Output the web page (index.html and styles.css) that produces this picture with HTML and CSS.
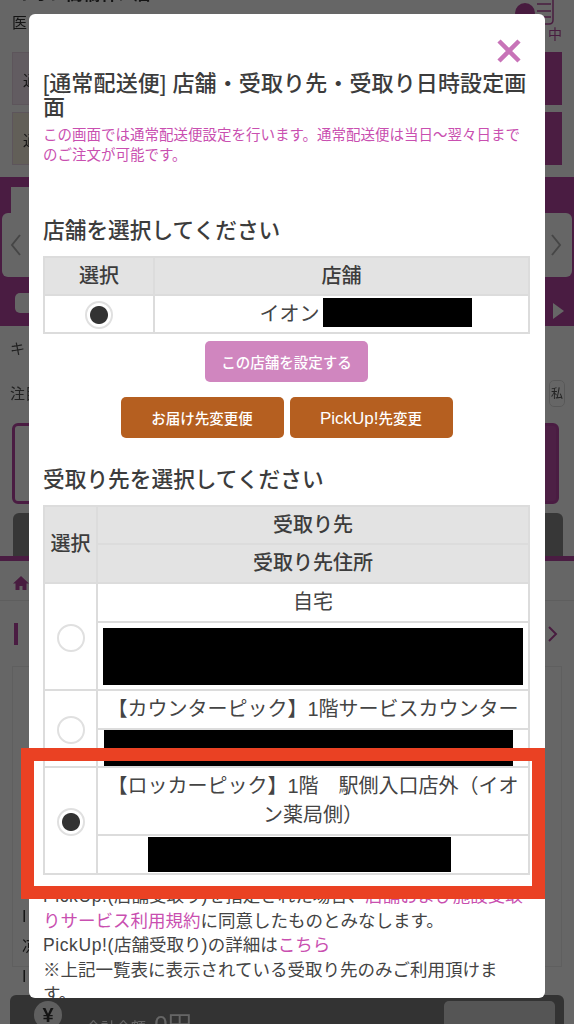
FILE: index.html
```html
<!DOCTYPE html>
<html lang="ja">
  <head>
    <meta charset="UTF-8" />
    <meta name="viewport" content="width=device-width, initial-scale=1.0" />
    <title>受取り先設定</title>
    <link rel="stylesheet" href="styles.css">
  </head>
  <body>
    <!-- PAGE BEHIND THE DIALOG -->
    <div class="page">
      <header class="shop-head">
        <div class="shop-info">
          <div class="shop-name">イオン高橋林ノ店</div>
          <div class="shop-sub">医</div>
        </div>
        <div class="cart">
          <svg class="cart-icon" width="48" height="25" viewBox="0 0 48 25">
            <circle cx="11" cy="13" r="10" fill="#b5489f" />
            <path d="M23 4h14M23 11h14M23 17h14M39 -2v22q0 4 -4 4h-7" fill="none" stroke="#b5489f" stroke-width="1.5" />
          </svg>
          <span class="cart-label">中</span>
        </div>
      </header>

      <div class="delivery-row">
        <div class="delivery-info tint-pink">通</div>
        <div class="delivery-btn"></div>
      </div>
      <div class="delivery-row">
        <div class="delivery-info tint-sand">通</div>
        <div class="delivery-btn"></div>
      </div>

      <!-- CALENDAR BAND -->
      <section class="band">
        <div class="band-tab"></div>
        <div class="band-cards">
          <div class="band-card">
            <svg width="12" height="24" viewBox="0 0 12 24">
              <path d="M10 2 2 12l8 10" fill="none" stroke="#b0b0b0" stroke-width="2" />
            </svg>
          </div>
          <div class="band-card">
            <svg width="12" height="24" viewBox="0 0 12 24">
              <path d="M2 2l8 10-8 10" fill="none" stroke="#b0b0b0" stroke-width="2" />
            </svg>
          </div>
        </div>
        <div class="band-foot">
          <div class="band-pill"></div>
          <div class="band-arrow"></div>
        </div>
      </section>

      <div class="key-row">キ</div>
      <div class="notice-row">
        <span>注目</span>
        <span class="notice-pill">私</span>
      </div>
      <div class="search-box"></div>
      <div class="dark-tab"></div>

      <nav class="crumbs">
        <svg width="16" height="16" viewBox="0 0 16 16">
          <path d="M8 1 0 8.500h2.500V15h4v-4h3v4h4V8.500H16z" fill="#b5489f" />
        </svg>
      </nav>

      <div class="section-head">
        <span class="section-mark"></span>
        <svg width="10" height="16" viewBox="0 0 10 16">
          <path d="M1 1l7 7-7 7" fill="none" stroke="#b5489f" stroke-width="2" />
        </svg>
      </div>

      <div class="item-box">
        <span>I</span>
        <span>凉</span>
        <span>I</span>
      </div>

      <footer class="total-bar">
        <span class="yen">¥</span>
        <span class="total-text">合計金額: <b>0円</b></span>
        <span class="total-btn"></span>
      </footer>
    </div>

    <div class="backdrop"></div>

    <!-- DIALOG -->
    <div class="modal">
      <div class="modal-top">
        <svg width="24" height="24" viewBox="0 0 24 24">
          <path d="M2 2l20 20M22 2 2 22" stroke="#c873b8" stroke-width="4.500" fill="none" />
        </svg>
      </div>
      <h2 class="modal-title">[通常配送便] 店舗・受取り先・受取り日時設定画面</h2>
      <p class="modal-note">この画面では通常配送便設定を行います。通常配送便は当日〜翌々日までのご注文が可能です。</p>

      <h3 class="block-title first">店舗を選択してください</h3>
      <table class="pick-table store-table">
        <tr>
          <th class="col-store-pick">選択</th>
          <th>店舗</th>
        </tr>
        <tr>
          <td class="cell-radio"><input class="radio" type="radio" name="store" checked /></td>
          <td><span class="store-name">イオン<span class="mask mask-store"></span></span></td>
        </tr>
      </table>

      <div class="btn-row set-row">
        <button class="btn btn-pink">この店舗を設定する</button>
      </div>
      <div class="btn-row change-row">
        <button class="btn btn-brown">お届け先変更便</button>
        <button class="btn btn-brown"><span class="btn-latin">PickUp!</span>先変更</button>
      </div>

      <h3 class="block-title second">受取り先を選択してください</h3>
      <table class="pick-table place-table">
        <tr class="place-head">
          <th class="col-place-pick" rowspan="2">選択</th>
          <th>受取り先</th>
        </tr>
        <tr>
          <th>受取り先住所</th>
        </tr>
        <tr>
          <td class="cell-radio" rowspan="2"><input class="radio" type="radio" name="place" /></td>
          <td>自宅</td>
        </tr>
        <tr>
          <td class="cell-mask home-mask"><div class="mask mask-home"></div></td>
        </tr>
        <tr>
          <td class="cell-radio" rowspan="2"><input class="radio" type="radio" name="place" /></td>
          <td>【カウンターピック】1階サービスカウンター</td>
        </tr>
        <tr>
          <td class="cell-mask counter-mask"><div class="mask mask-counter"></div></td>
        </tr>
        <tr>
          <td class="cell-radio" rowspan="2"><input class="radio" type="radio" name="place" checked /></td>
          <td class="cell-wrap">【ロッカーピック】1階　駅側入口店外（イオン薬局側）</td>
        </tr>
        <tr>
          <td class="cell-mask locker-mask"><div class="mask mask-locker"></div></td>
        </tr>
      </table>

      <p class="terms">
        <span class="latin">PickUp!(</span>店舗受取り<span class="latin">)</span>を指定された場合、<a href="#">店舗および施設受取りサービス利用規約</a>に同意したものとみなします。<br />
        <span class="latin">PickUp!(</span>店舗受取り<span class="latin">)</span>の詳細は<a href="#">こちら</a><br />
        ※上記一覧表に表示されている受取り先のみご利用頂けます。
      </p>
    </div>

    <!-- ANNOTATION -->
    <div class="red-frame"></div>
  </body>
</html>
```

FILE: styles.css
```css
/* RESET */
html,
body {
  margin: 0;
  padding: 0;
  height: 1024px;
  overflow: hidden;
}
*,
*::before,
*::after {
  box-sizing: border-box;
}

body {
  position: relative;
  width: 574px;
  font-family: "Liberation Sans", "Noto Sans CJK JP", sans-serif;
  color: #444;
  background: #fff;
}

/* PAGE BEHIND */
.page {
  height: 1024px;
  overflow: hidden;
  padding: 0 12px;
  color: #333;
  filter: blur(0.6px);
}
.shop-head {
  display: flex;
  justify-content: space-between;
  height: 52px;
}
.shop-name {
  margin: -17px 0 0 3px;
  font-size: 17px;
  line-height: 24px;
  font-weight: bold;
}
.shop-sub {
  margin-top: 6px;
  font-size: 15px;
  line-height: 20px;
}
.cart {
  display: flex;
  flex-direction: column;
  align-items: flex-end;
}
.cart-label {
  margin: 0;
  font-size: 14px;
  line-height: 18px;
  color: #b5489f;
}
.delivery-row {
  display: flex;
  justify-content: space-between;
  height: 53px;
  margin-bottom: 7px;
}
.delivery-info {
  width: 200px;
  padding: 16px 0 0 10px;
  font-size: 15px;
  border: 1px solid #e8d5e4;
}
.tint-pink {
  background: #f6e6f2;
}
.tint-sand {
  background: #f6eedd;
}
.delivery-btn {
  width: 100px;
  background: #bb4aa6;
}

/* BAND */
.band {
  margin: 12px -12px 0;
  height: 149px;
  padding: 10px 2px 0;
  background: #b946a5;
}
.band-tab {
  width: 60px;
  height: 26px;
  margin-left: 9px;
  background: #fff;
}
.band-cards {
  display: flex;
  justify-content: space-between;
}
.band-card {
  display: flex;
  align-items: center;
  width: 120px;
  height: 64px;
  padding: 0 8px;
  border-radius: 6px;
  background: #fff;
}
.band-card:last-child {
  justify-content: flex-end;
  padding-right: 10px;
}
.band-foot {
  display: flex;
  justify-content: space-between;
  margin-top: 16px;
}
.band-pill {
  width: 80px;
  height: 20px;
  margin-left: 13px;
  border-radius: 5px;
  background: #fff;
}
.band-arrow {
  width: 0;
  height: 0;
  margin: 10px 8px 0 0;
  border-left: 11px solid #fff;
  border-top: 8px solid transparent;
  border-bottom: 8px solid transparent;
}

.key-row {
  margin: 13px 0 0 -2px;
  height: 20px;
  font-size: 15px;
  line-height: 20px;
  color: #555;
}
.notice-row {
  display: flex;
  justify-content: space-between;
  margin: 21px 0 0 -2px;
  height: 43px;
  font-size: 15px;
  line-height: 27px;
  color: #555;
}
.notice-pill {
  width: 16px;
  height: 27px;
  margin-right: -3px;
  overflow: hidden;
  font-size: 12px;
  text-align: center;
  border: 1px solid #ddd;
  border-radius: 5px;
}
.search-box {
  height: 81px;
  margin: 0 3px 0 0;
  border: 3px solid #b946a5;
  border-radius: 6px;
  background: linear-gradient(to right, #fff 60%, #c050ac 60%);
}
.dark-tab {
  height: 43px;
  margin: 9px -1px 0 1px;
  border-radius: 6px 6px 0 0;
  background: #8a8a8a;
}
.crumbs {
  display: flex;
  align-items: center;
  height: 45px;
  margin: 0 -12px;
  padding: 4px 0 0 13px;
  border-top: 5px solid #b946a5;
  border-bottom: 1px solid #ececec;
}
.section-head {
  display: flex;
  justify-content: space-between;
  align-items: center;
  height: 65px;
  padding: 0 4px 0 2px;
}
.section-mark {
  width: 4px;
  height: 22px;
  background: #b946a5;
}
.item-box {
  display: flex;
  flex-direction: column;
  height: 301px;
  padding: 235px 0 0 9px;
  border: 1px solid #eee;
  font-size: 16px;
  line-height: 30px;
}

/* TOTAL BAR */
.total-bar {
  display: flex;
  align-items: flex-start;
  height: 40px;
  margin: 28px -2px 0;
  padding: 6px 9px 0 24px;
  border-radius: 6px 6px 0 0;
  color: #fff;
  background: #808080;
}
.yen {
  width: 28px;
  height: 28px;
  border-radius: 50%;
  font-size: 20px;
  line-height: 28px;
  font-weight: bold;
  text-align: center;
  color: #333;
  background: #eee;
}
.total-text {
  margin: 4px 0 0 24px;
  font-size: 15px;
}
.total-text b {
  font-size: 24px;
  font-weight: normal;
}
.total-btn {
  width: 111px;
  height: 30px;
  margin-left: auto;
  border-radius: 5px;
  background: #d5d5d5;
}

.backdrop {
  position: absolute;
  inset: 0;
  background: rgba(0, 0, 0, 0.6);
}

/* DIALOG */
.modal {
  position: absolute;
  top: 14px;
  left: 29px;
  width: 516px;
  height: 984px;
  overflow: hidden;
  padding: 25px 15px 0 14px;
  border-radius: 6px;
  background: #fff;
}
.modal-top {
  display: flex;
  justify-content: flex-end;
  height: 24px;
  margin: 0 9px 9px 0;
}
.modal-title {
  margin: 0;
  font-size: 22px;
  line-height: 24px;
  font-weight: 500;
  letter-spacing: 0.13px;
  color: #3c3c3c;
}
.modal-note {
  margin: 5px 0 0;
  font-size: 14.500px;
  line-height: 20px;
  color: #c94fb0;
}
.block-title {
  margin: 0 0 10px;
  font-size: 21.700px;
  line-height: 30px;
  font-weight: 500;
  color: #3c3c3c;
}
.block-title.first {
  margin-top: 51px;
}
.block-title.second {
  margin-top: 27px;
}

/* TABLES */
.pick-table {
  width: 487px;
  table-layout: fixed;
  border-collapse: collapse;
  font-size: 20px;
  line-height: 29px;
  text-align: center;
}
.pick-table th,
.pick-table td {
  height: 38px;
  padding: 0 6px;
  border: 2px solid #dcdcdc;
}
.place-table th,
.place-table td {
  height: 39px;
}
.place-table .place-head th {
  height: 38px;
}
.pick-table th {
  font-size: 20px;
  font-weight: 500;
  color: #3c3c3c;
  background: #e3e3e3;
}
.col-store-pick {
  width: 110px;
}
.pick-table .col-place-pick {
  width: 53px;
  padding: 0;
}
.pick-table td.cell-wrap {
  height: 68px;
}
.pick-table td.home-mask {
  height: 68px;
}
.pick-table td.counter-mask {
  height: 38px;
}
.pick-table td.cell-mask {
  padding: 0;
  text-align: left;
}
.radio {
  display: block;
  width: 28px;
  height: 28px;
  margin: 2px auto 0;
  border: 2px solid #e0e0e0;
  border-radius: 50%;
  appearance: none;
  background: #fff;
}
.radio:checked {
  background: radial-gradient(circle, #333 8.500px, #fff 9.500px);
}
.store-name {
  display: inline-flex;
  align-items: center;
  margin-left: 48px;
}
.mask {
  background: #000;
}
.mask-store {
  width: 149px;
  height: 29px;
  margin: -4px 0 0 3px;
}
.mask-home {
  width: 420px;
  height: 57px;
  margin: 0 0 0 5px;
}
.mask-counter {
  width: 409px;
  height: 36px;
  margin: 0 0 0 6px;
}
.mask-locker {
  width: 303px;
  height: 35px;
  margin: 0 0 0 50px;
}

/* BUTTONS */
.btn-row {
  display: flex;
  justify-content: center;
  gap: 6px;
}
.set-row {
  margin-top: 7px;
}
.change-row {
  margin-top: 15px;
}
.btn {
  width: 163px;
  height: 41px;
  padding: 0;
  border: 0;
  border-radius: 5px;
  font-family: inherit;
  font-size: 14.500px;
  font-weight: 500;
  color: #fff;
}
.btn-latin {
  font-size: 17px;
  font-weight: normal;
}
.btn-pink {
  background: #d086bf;
}
.btn-brown {
  background: #b55f20;
}

/* TERMS */
.terms {
  margin: 9px 0 0;
  font-size: 17.500px;
  line-height: 24.500px;
  color: #444;
}
.terms a {
  color: #c94fb0;
  text-decoration: none;
}
.latin {
  letter-spacing: 0.6px;
}

/* ANNOTATION */
.red-frame {
  position: absolute;
  top: 748px;
  left: 21px;
  width: 524px;
  height: 151px;
  border: 13px solid #ea4123;
}
```
